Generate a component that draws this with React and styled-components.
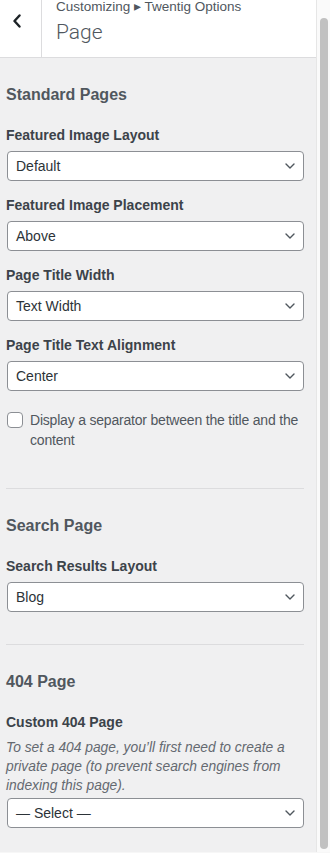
import React from "react";
import styled, { createGlobalStyle } from "styled-components";

const Global = createGlobalStyle`
  html, body { margin: 0; padding: 0; background: #f0f0f1; }
  body { font-family: "Liberation Sans", Arial, sans-serif; -webkit-font-smoothing: antialiased; }
  * { box-sizing: border-box; }
`;

const Frame = styled.div`
  display: flex;
  width: 330px;
  height: 853px;
  overflow: hidden;
  border-bottom: 1px solid #f7f7f7;
`;

const Panel = styled.div`
  width: 316px;
  flex: none;
  display: flex;
  flex-direction: column;
  background: #f0f0f1;
`;

const Header = styled.header`
  display: flex;
  height: 58px;
  background: #fff;
  border-bottom: 1px solid #dcdcde;
`;

const BackButton = styled.button`
  width: 42px;
  flex: none;
  border: 0;
  border-right: 1px solid #dcdcde;
  background: #fff;
  padding: 14px 0 0 12px;
  display: flex;
  align-items: flex-start;
  color: #1d2327;
`;

const TitleBlock = styled.div`
  display: flex;
  flex-direction: column;
  padding-left: 14px;
`;

const Crumb = styled.span`
  font-size: 13.5px;
  line-height: 13px;
  color: #50575e;
`;

const PageTitle = styled.h2`
  margin: 6px 0 0;
  font-family: Roboto, "Liberation Sans", sans-serif;
  font-size: 21px;
  line-height: 26px;
  font-weight: 300;
  color: #50575e;
`;

const Section = styled.section`
  display: flex;
  flex-direction: column;
  padding-top: 27px;
  padding-bottom: ${(p) => p.$bottom}px;
  border-top: ${(p) => (p.$divided ? "1px solid #dcdcde" : "0")};
  margin: ${(p) => (p.$divided ? "0 12px 0 6px" : "0")};
  padding-left: ${(p) => (p.$divided ? "0" : "6px")};
  padding-right: ${(p) => (p.$divided ? "0" : "12px")};
`;

const SectionTitle = styled.h3`
  margin: 0 0 20px;
  font-size: 16px;
  line-height: 20px;
  font-weight: 700;
  color: #50575e;
`;

const Control = styled.div`
  display: flex;
  flex-direction: column;
  margin-bottom: ${(p) => (p.$last ? 0 : 14)}px;
`;

const Label = styled.span`
  font-size: 14px;
  line-height: 20px;
  font-weight: 700;
  color: #3c434a;
  margin-bottom: 6px;
`;

const Description = styled.span`
  font-size: 13.8px;
  line-height: 19px;
  font-style: italic;
  color: #646970;
  margin: 0 0 3px;
`;

const Select = styled.div`
  display: flex;
  align-items: center;
  justify-content: space-between;
  height: 30px;
  margin-left: 1px;
  padding: 0 8px 0 8px;
  background: #fff;
  border: 1px solid #8c8f94;
  border-radius: 4px;
  font-size: 14px;
  color: #2c3338;
`;

const CheckRow = styled.label`
  display: flex;
  align-items: flex-start;
  gap: 7px;
  margin: 5px 0 0 1px;
  font-size: 14px;
  line-height: 20px;
  letter-spacing: -0.2px;
  color: #50575e;
`;

const Box = styled.span`
  width: 16px;
  height: 16px;
  flex: none;
  margin-top: 2px;
  background: #fff;
  border: 1px solid #8c8f94;
  border-radius: 4px;
`;

const Track = styled.div`
  width: 14px;
  flex: none;
  background: #fafafa;
  border-left: 1px solid #e6e6e6;
  padding: 18px 2px 3px 3px;
`;

const Thumb = styled.div`
  height: 831px;
  width: 8px;
  border-radius: 4px;
  background: #c1c1c1;
`;

const Chevron = () => (
  <svg width="10" height="6" viewBox="0 0 10 6" fill="none">
    <path d="M1 1l4 4 4-4" stroke="#50575e" strokeWidth="1.4" strokeLinecap="round" strokeLinejoin="round" />
  </svg>
);

const Back = () => (
  <svg width="10" height="14" viewBox="0 0 10 14" fill="none">
    <path d="M7.5 1.5L2.5 7l5 5.5" stroke="#1d2327" strokeWidth="2.4" strokeLinecap="round" strokeLinejoin="round" />
  </svg>
);

const Dropdown = ({ label, value, last, children }) => (
  <Control $last={last}>
    <Label>{label}</Label>
    {children}
    <Select>
      <span>{value}</span>
      <Chevron />
    </Select>
  </Control>
);

export default function App() {
  return (
    <>
      <Global />
      <Frame>
        <Panel>
          <Header>
            <BackButton aria-label="Back">
              <Back />
            </BackButton>
            <TitleBlock>
              <Crumb>Customizing ▸ Twentig Options</Crumb>
              <PageTitle>Page</PageTitle>
            </TitleBlock>
          </Header>

          <Section $bottom={38}>
            <SectionTitle>Standard Pages</SectionTitle>
            <Dropdown label="Featured Image Layout" value="Default" />
            <Dropdown label="Featured Image Placement" value="Above" />
            <Dropdown label="Page Title Width" value="Text Width" />
            <Dropdown label="Page Title Text Alignment" value="Center" />
            <CheckRow>
              <Box />
              <span>Display a separator between the title and the content</span>
            </CheckRow>
          </Section>

          <Section $divided $bottom={32}>
            <SectionTitle>Search Page</SectionTitle>
            <Dropdown label="Search Results Layout" value="Blog" last />
          </Section>

          <Section $divided $bottom={20}>
            <SectionTitle>404 Page</SectionTitle>
            <Dropdown label="Custom 404 Page" value="— Select —" last>
              <Description>
                To set a 404 page, you’ll first need to create a private page (to prevent search engines from indexing this page).
              </Description>
            </Dropdown>
          </Section>
        </Panel>
        <Track>
          <Thumb />
        </Track>
      </Frame>
    </>
  );
}
